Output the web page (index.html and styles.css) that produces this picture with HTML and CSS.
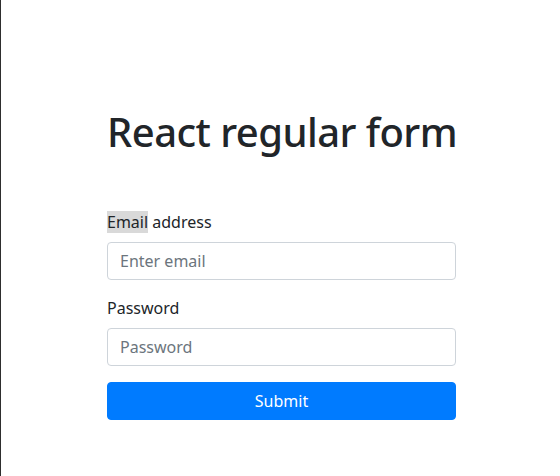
FILE: index.html
```html
<!DOCTYPE html>
<html lang="en">
<head>
<meta charset="utf-8">
<title>React regular form</title>
<link rel="stylesheet" href="styles.css">
</head>
<body>
<div class="page">
  <div class="container">
    <h1 class="title">React regular form</h1>
    <form class="form">
      <div class="form-group">
        <label class="label" for="email"><span class="hl">Email</span> address</label>
        <input class="control" id="email" type="email" placeholder="Enter email">
      </div>
      <div class="form-group">
        <label class="label" for="password">Password</label>
        <input class="control" id="password" type="password" placeholder="Password">
      </div>
      <button class="btn" type="button">Submit</button>
    </form>
  </div>
</div>
</body>
</html>
```
FILE: styles.css
```css
html, body {
  margin: 0;
  padding: 0;
  height: 100%;
  background: #fff;
}
body {
  border-left: 1px solid #2e2e2e;
  box-sizing: border-box;
  font-family: "Noto Sans", "Open Sans", sans-serif;
  font-size: 16px;
  line-height: 1.5;
  color: #212529;
}
.page {
  display: flex;
  justify-content: center;
  padding-top: 108px;
  padding-left: 2px;
}
.container {
  width: 349px;
}
.title {
  margin: 0 0 54px;
  font-size: 40px;
  font-weight: 500;
  line-height: 48px;
  letter-spacing: -0.55px;
  text-align: center;
  white-space: nowrap;
}
.form {
  margin: 0;
}
.form-group {
  margin-bottom: 16px;
}
.label {
  display: inline-block;
  margin-bottom: 8px;
}
.hl {
  background: #d9d9d9;
}
.control {
  display: block;
  width: 100%;
  height: 38px;
  box-sizing: border-box;
  padding: 6px 12px;
  font-family: inherit;
  font-size: 16px;
  line-height: 1.5;
  color: #495057;
  background: #fff;
  border: 1px solid #ced4da;
  border-radius: 4px;
  outline: none;
}
.control::placeholder {
  color: #6c757d;
  opacity: 1;
}
.btn {
  display: block;
  width: 100%;
  height: 38px;
  padding: 6px 12px;
  font-family: inherit;
  font-size: 16px;
  line-height: 1.5;
  color: #fff;
  background: #007bff;
  border: 1px solid #007bff;
  border-radius: 4px;
  cursor: pointer;
}
```
